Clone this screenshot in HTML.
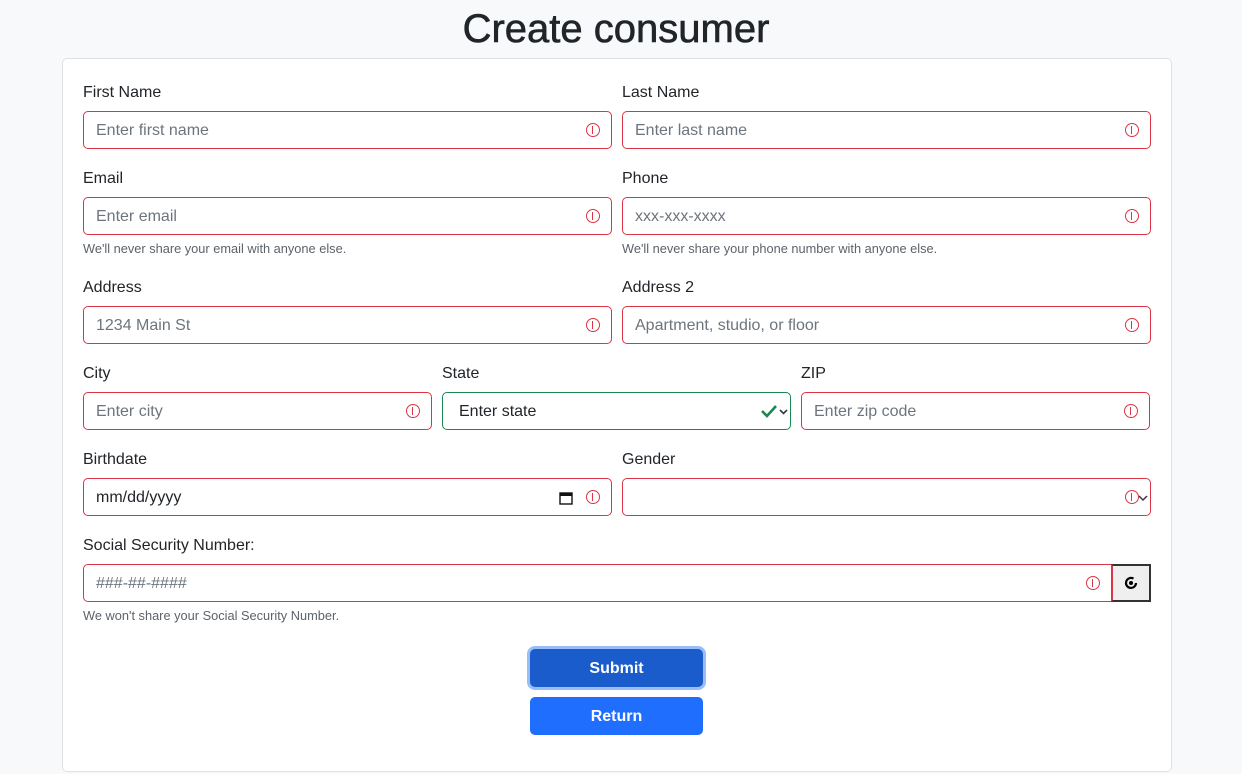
<!DOCTYPE html>
<html><head><meta charset="utf-8"><style>
body{margin:0;width:1242px;height:774px;background:#f8f9fa;font-family:"Liberation Sans",Helvetica,Arial,sans-serif;position:relative;overflow:hidden;color:#212529}
h1{position:absolute;left:0;width:1232px;top:5px;margin:0;text-align:center;font-size:40px;font-weight:500;line-height:48px;-webkit-text-stroke:0.6px #212529}
.card{position:absolute;left:62px;top:58px;width:1108px;height:712px;background:#fff;border:1px solid #dee2e6;border-radius:5px}
.l{position:absolute;font-size:16px;line-height:20px}
.i{position:absolute;height:36px;border:1px solid #dc3545;border-radius:5px;background:#fff;box-sizing:content-box;font-size:16px;line-height:38px;color:#6c757d;padding-left:12px}
.i.ok{border-color:#198754;color:#212529}
.e{position:absolute;display:block;top:11px;width:14px;height:14px;border:1.6px solid #dc3545;border-radius:50%;box-sizing:border-box}
.e::before{content:"";position:absolute;left:4.6px;top:2.2px;width:1.8px;height:5.4px;background:#dc3545}
.e::after{content:"";position:absolute;left:4.6px;top:8.4px;width:1.8px;height:1.8px;background:#dc3545}
.h{position:absolute;font-size:12.8px;color:#5c636a;line-height:16px}
.btn{position:absolute;left:530px;width:173px;height:38px;border-radius:5px;color:#fff;font-weight:bold;font-size:16px;text-align:center;line-height:40px}
</style></head><body>
<h1>Create consumer</h1>
<div class="card"></div>

<div class="l" style="left:83px;top:83px">First Name</div>
<div class="i" style="left:83px;top:111px;width:515px">Enter first name<span class="e" style="left:502px"></span></div>
<div class="l" style="left:622px;top:83px">Last Name</div>
<div class="i" style="left:622px;top:111px;width:515px">Enter last name<span class="e" style="left:502px"></span></div>

<div class="l" style="left:83px;top:169px">Email</div>
<div class="i" style="left:83px;top:197px;width:515px">Enter email<span class="e" style="left:502px"></span></div>
<div class="h" style="left:83px;top:241px">We'll never share your email with anyone else.</div>
<div class="l" style="left:622px;top:169px">Phone</div>
<div class="i" style="left:622px;top:197px;width:515px">xxx-xxx-xxxx<span class="e" style="left:502px"></span></div>
<div class="h" style="left:622px;top:241px">We'll never share your phone number with anyone else.</div>

<div class="l" style="left:83px;top:278px">Address</div>
<div class="i" style="left:83px;top:306px;width:515px">1234 Main St<span class="e" style="left:502px"></span></div>
<div class="l" style="left:622px;top:278px">Address 2</div>
<div class="i" style="left:622px;top:306px;width:515px">Apartment, studio, or floor<span class="e" style="left:502px"></span></div>

<div class="l" style="left:83px;top:364px">City</div>
<div class="i" style="left:83px;top:392px;width:335px">Enter city<span class="e" style="left:322px"></span></div>
<div class="l" style="left:442px;top:364px">State</div>
<div class="i ok" style="left:442px;top:392px;width:331px;padding-left:16px">Enter state
<svg style="position:absolute;left:318px;top:11px" width="30" height="14" viewBox="0 0 30 14"><path d="M1 7l5 5L15 2" stroke="#198754" stroke-width="2.6" fill="none"/><path d="M19 6l3.5 3.5L26 6" stroke="#343a40" stroke-width="1.6" fill="none"/></svg></div>
<div class="l" style="left:801px;top:364px">ZIP</div>
<div class="i" style="left:801px;top:392px;width:335px">Enter zip code<span class="e" style="left:322px"></span></div>

<div class="l" style="left:83px;top:450px">Birthdate</div>
<div class="i" style="left:83px;top:478px;width:515px;color:#212529">mm/dd/yyyy
<svg style="position:absolute;left:475px;top:12px" width="14" height="14" viewBox="0 0 14 14"><rect x="1" y="2" width="12" height="11" fill="none" stroke="#111" stroke-width="1.4"/><rect x="1" y="2" width="12" height="3" fill="#111"/></svg>
<span class="e" style="left:502px"></span></div>
<div class="l" style="left:622px;top:450px">Gender</div>
<div class="i" style="left:622px;top:478px;width:515px"><span class="e" style="left:502px"></span>
<svg style="position:absolute;left:515px;top:15px" width="10" height="8" viewBox="0 0 10 8"><path d="M1 2l4 4 4-4" stroke="#343a40" stroke-width="1.5" fill="none"/></svg></div>

<div class="l" style="left:83px;top:536px">Social Security Number:</div>
<div class="i" style="left:83px;top:564px;width:1015px;border-radius:5px 0 0 5px">###-##-####<span class="e" style="left:1002px"></span></div>
<div style="position:absolute;left:1111px;top:564px;width:36px;height:34px;background:#efefef;border:2px solid #333;border-left-color:#dc3545"><svg style="position:absolute;left:11px;top:10px" width="14" height="14" viewBox="0 0 14 14"><path d="M9.5 2.6A5 5 0 1 0 12 7" stroke="#000" stroke-width="2.2" fill="none"/><circle cx="7" cy="7" r="2" fill="#000"/></svg></div>
<div class="h" style="left:83px;top:608px">We won't share your Social Security Number.</div>

<div class="btn" style="top:649px;background:#1a5ccc;box-shadow:0 0 0 3px #98bdf9">Submit</div>
<div class="btn" style="top:697px;background:#1f6efd">Return</div>
</body></html>
